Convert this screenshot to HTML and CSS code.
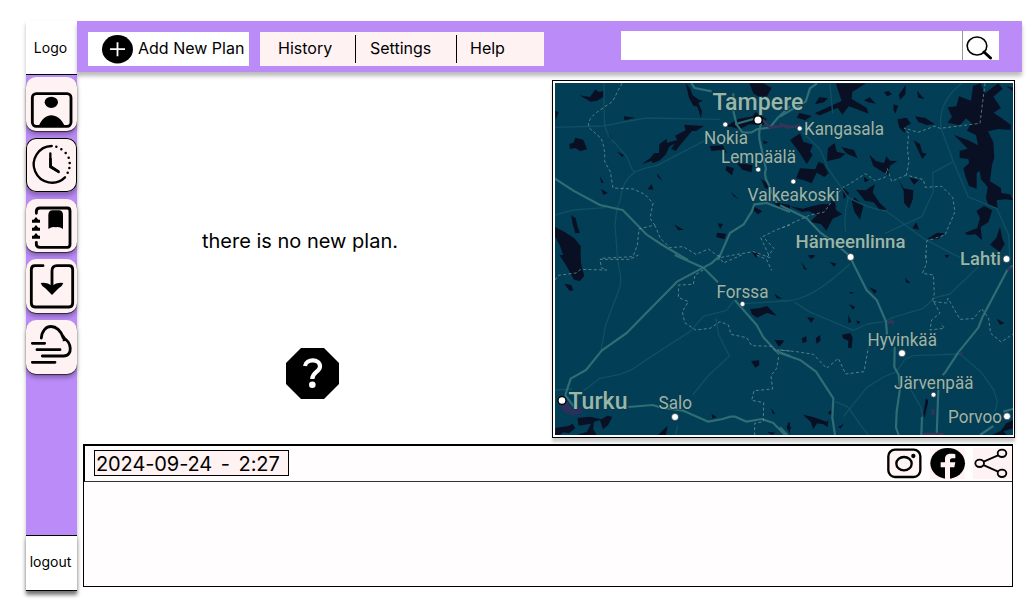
FILE: index.html
```html
<!DOCTYPE html>
<html lang="en">
<head>
<meta charset="utf-8">
<title>Travel plans</title>
<link rel="stylesheet" href="styles.css">
</head>
<body>
<div class="app">
  <aside class="sidebar">
    <div class="logo">Logo</div>
    <nav class="tiles">
      <a class="tile"><svg viewBox="0 0 153 162"><rect class="ln" x="19" y="50" width="116" height="98" rx="12"/><ellipse cx="76" cy="76" rx="20" ry="17"/><path d="M38 148C46 126 62 115 76 115S108 126 116 148Z"/></svg></a>
      <a class="tile outlined"><svg viewBox="0 0 153 162"><path class="ln thin" d="M77 24A55 55 0 1 0 117 118M73 46V86L98 102"/><path d="M70 60L77 60L78 83L101 98L98 105L70 89Z"/><path class="dots" d="M91 26h.1M106 34h.1M119 45h.1M128 59h.1M131 75h.1M130 90h.1M125 104h.1"/></svg></a>
      <a class="tile"><svg viewBox="0 0 153 162"><path class="ln" d="M31 43V38Q31 27 42 27H124Q132 27 132 36V136Q132 145 124 145H42Q31 145 31 136V130"/><path d="M67 90V48Q67 34 80 34H98Q111 34 111 48V90Q100 82 89 85Q78 82 67 90Z"/><path d="M30 54L37 62H42V71H18V62H23ZM30 78L37 86H42V95H18V86H23ZM30 102L37 110H42V119H18V110H23Z"/></svg></a>
      <a class="tile"><svg viewBox="0 0 153 162"><path class="ln" d="M51 20H27Q16 20 16 32V132Q16 144 27 144H129Q140 144 140 132V32Q140 20 129 20H93Q78 20 78 36V92"/><path d="M44 72Q62 68 78 80Q94 68 112 72Q108 84 98 88L78 108L58 88Q48 84 44 72Z"/></svg></a>
      <a class="tile"><svg viewBox="0 0 153 162"><path class="ln" d="M46 54C50 8 98 8 112 54C137 64 142 108 113 108H49M19 70H56M33 89H102M19 127H87"/><path d="M112 43L125 62L110 64Z"/></svg></a>
    </nav>
    <a class="logout">logout</a>
  </aside>
  <div class="main">
    <header class="topbar">
      <a class="add"><svg viewBox="0 0 31 29"><ellipse cx="15.5" cy="14.2" rx="15.5" ry="14.2"/><path d="M8 14.2H23M15.5 7.2V21.2" stroke="#fff" stroke-width="1.8"/></svg><span>Add New Plan</span></a>
      <nav class="menu"><a class="history">History</a><a class="settings">Settings</a><a class="help">Help</a></nav>
      <form class="search"><input aria-label="Search"><button type="button" aria-label="Find"><svg viewBox="0 0 36 28"><ellipse cx="14" cy="14" rx="9.8" ry="9" fill="none" stroke="#000" stroke-width="1.6"/><path d="M21 20L27.5 26" stroke="#000" stroke-width="3" stroke-linecap="round"/></svg></button></form>
    </header>
    <div class="content">
      <section class="empty">
        <p>there is no new plan.</p>
        <svg viewBox="0 0 53 51"><path d="M15 0H38L53 15V36L38 51H15L0 36V15Z"/><path d="M19 18C20 10.500 34 10.500 34 18.500C34 24 26 24 26.300 31" fill="none" stroke="#fff" stroke-width="4.200"/><circle cx="26.300" cy="36.800" r="3.300" fill="#fff"/></svg>
      </section>
      <section class="map">
        <svg viewBox="555 83 458 352">
          <rect class="land" x="555" y="83" width="458" height="352"/>
          <!-- north-west -->
          <g transform="translate(550 75) scale(.33333)">
            <path class="water" d="M88 61L120 66L136 43L146 51L161 48L162 65L141 77L122 80L104 70ZM58 207L70 203L76 188L100 194L111 223L91 228L75 219L60 222ZM221 124L256 128L224 136ZM275 268L301 249L313 234H327L328 208L350 191L351 203L382 195L375 182L407 166L402 149L462 153L438 168H426L393 207L377 228L363 222L375 205L358 215L348 238L328 257L309 264L304 258ZM407 25L420 40L428 61L444 73L459 77L445 84L456 108L453 130L442 95L430 92L417 68ZM15 456L44 471L73 490L92 513V555H45L29 510L15 485ZM63 420L77 430L83 455L90 473L76 475L68 447ZM15 108L26 111L17 135ZM170 170L187 192L180 196ZM201 229L222 241L216 246ZM149 303L161 323L154 324ZM153 341L173 354L160 360ZM305 327L310 344L293 343ZM321 294L338 318L323 305ZM373 449L401 464L385 466ZM503 445L519 447L511 463ZM501 473L528 476L524 493L499 486ZM543 351L566 373L551 364ZM610 393L637 409L624 418L612 408ZM526 155L565 132L608 124L617 112L650 132L640 150L598 148L568 163L547 156ZM598 25H640L665 38L652 62L630 69L610 55ZM480 213L518 211L531 234L510 225L484 228ZM530 273L552 280L546 301L526 285ZM560 264L608 270L605 292L577 284ZM632 311L656 327L662 345L645 338ZM640 196L655 203L641 207ZM670 382L720 390V408L690 404ZM605 530L628 537L618 548Z"/>
            <path class="minor" d="M15 157L160 153L221 141L290 129L510 133M162 25V95L164 150Q173 190 196 205L230 244L247 285L255 291Q290 276 320 272L470 194M255 291Q215 320 212 370L200 405L195 450L203 555M15 420L70 405L165 398"/>
            <path class="road" d="M15 311L70 347L150 390L218 405L289 478L337 510L414 555M424 25L434 39L485 49M504 555L540 474L581 448L605 410L613 388L650 384L720 411M634 142Q622 178 632 210L648 282Q640 302 654 325L680 384M550 108L560 149L578 173L605 172L620 163L660 157L682 130L720 94M550 55L550 108M555 148L624 128"/>
            <path class="town" d="M638 134L660 158L700 152L720 154"/>
            <path class="border" d="M216 25L206 43L188 79L140 112Q110 135 117 158L153 190Q166 218 164 260L181 290L189 339L250 342L286 359L309 385L300 430L314 450L267 462L262 510L249 545L150 550M314 450L331 490L360 518L400 515L438 538L475 522L510 548L545 541L610 530L660 548L632 488L680 464L720 450M645 492L672 520L650 548"/>
          </g>
          <!-- north-east -->
          <g transform="translate(780 75) scale(.33333)">
            <path class="water" d="M167 25H258L241 36L217 50L215 72L260 98L266 116L220 98L206 94L187 119L173 98L120 121L104 115L150 94L185 78ZM105 88L118 66L144 70L132 82ZM58 114L95 123L76 136L50 128ZM252 76L269 67L288 86L264 82ZM312 52L326 48L336 58L322 64ZM341 88L355 92L346 116L340 103ZM356 60L378 29L376 58L361 74ZM411 47L433 72L414 68ZM352 133L380 128L393 146L377 154L374 174L358 158ZM405 124L436 129L465 148L440 150L415 141ZM141 259L144 219L164 204L170 230L196 236L181 249ZM183 216L222 225L233 250L201 236ZM30 195L60 175L70 200L98 209L90 230L98 240L80 268L60 235ZM48 310L60 280L106 283L115 260L130 266L146 295L133 306L110 293L95 325L70 315ZM268 239L288 258L312 264L319 244L330 257L352 258L329 273L326 301L307 290L280 273ZM401 196L420 207L427 233L440 236L427 252L413 223ZM503 97L529 94L537 64L573 77L579 32L602 25L615 55L631 42L655 25L668 41L640 65L663 99L641 113L676 137L693 150L691 165L656 162L624 169L640 202L643 249L636 270L630 319L663 339L664 354L690 358L699 376L676 373L650 376L653 399L625 389L618 369L623 335L603 313L599 288L590 294L590 341L567 333L555 300L550 280L567 265L565 252L539 249V227L563 221L522 180L565 196L594 211L588 180L561 167L573 143L558 130L540 151L502 143L516 126ZM355 313L371 340L400 346L399 371L387 401L372 383L371 348ZM388 308L417 314L402 329ZM228 344L257 346L274 334L285 328L278 352L299 384L320 403L302 408L281 382L255 377ZM215 379L224 367L250 393L240 434L223 410ZM251 305L268 316L254 322ZM187 336L208 355L191 373ZM28 393L69 401L89 395L126 387L148 388L157 370L166 386L168 405L187 418L158 431L139 467L123 447L89 441L111 421L86 408L66 411ZM409 442L417 464L397 460ZM555 473L591 460L600 429L589 408L612 393L637 406L625 442L602 456L606 496L587 478L562 480ZM660 455L667 491L674 506L660 531L630 509L649 488ZM442 491L472 473L494 475L473 493ZM83 541L106 542L93 552ZM678 33L699 38V49ZM661 298L683 300Z"/>
            <path class="minor" d="M66 170L120 223L144 280L205 368Q270 403 318 408L430 490L540 548M205 368Q190 420 197 470M315 475L425 425L460 350L458 293L520 260L484 162Q470 85 545 25M484 162L520 260L565 366L650 400L686 480L690 555M150 25L158 115"/>
            <path class="road" d="M0 125L50 95L77 80L90 40L111 25M0 391L80 430L120 472L160 501L206 540"/>
            <path class="town" d="M0 146L23 158L60 151"/>
            <path class="border" d="M615 25L600 145L480 160L465 153L414 172L373 159L386 175L382 220L387 260L379 300L430 314L436 337L485 334L518 367L525 410L495 480L440 498L437 555M379 300L335 319L322 281L315 307L286 317L256 296L210 326L188 338L161 371L133 411L88 421L0 461"/>
          </g>
          <!-- south-west -->
          <g transform="translate(550 255) scale(.33333)">
            <path class="water" d="M28 0H90L95 35L103 62L90 78L72 74L50 34ZM43 86L64 90L70 106L59 108ZM600 162L627 160L651 153L681 183L651 174L621 188L606 178ZM603 318L627 316L628 330L616 338ZM673 254L702 257L687 275ZM673 116L697 132L680 130ZM16 519L55 513L68 506L76 520L57 535L40 532L30 540H15ZM82 489L120 485L154 493L172 482L187 485L175 509L159 523L150 496L132 500L129 522L140 540H80L110 531L123 506L86 512ZM324 540L353 512L348 540ZM485 477L500 486L487 491ZM664 459L676 478L667 475ZM710 516L720 500V538ZM652 530L676 533L665 540Z"/>
            <path class="minor" d="M203 0L206 35Q220 80 203 115L167 210L153 285M100 408L150 370L210 358L245 344L340 281L420 230L460 184L530 166L552 136M580 146L720 137M498 190L505 237L538 303L474 363L428 420M384 510L376 540M15 405L66 402"/>
            <path class="road" d="M374 0L460 38L504 82M512 0L484 25L381 80L230 234L155 287L108 345L62 371L46 420M555 136L620 210L640 247L678 288L720 303M235 456L308 450L330 457L400 467L475 500L518 492L540 485H556L590 500L636 492L670 504L705 540M45 420L80 465"/>
            <path d="M25 446L52 437L66 461L93 455L98 473L70 482L42 472Z" fill="#29305b"/>
            <path class="border" d="M15 75L25 61L78 54L92 43L170 45L154 38L150 13L240 13L265 0M460 45L435 60L430 88L386 90L385 127L415 140L397 170L404 203L437 225L480 220L510 200L535 210L543 238L590 248L605 272L665 274L687 300L680 340L663 362L668 402L612 407L605 436L641 443L640 500L614 505V540M505 0L520 24L575 0M620 0L650 14L665 46M680 285L720 288"/>
          </g>
          <!-- south-east -->
          <g transform="translate(780 255) scale(.33333)">
            <path class="water" d="M64 21L81 45L72 42ZM84 0H104L98 9ZM148 20L169 26L163 35ZM267 96L291 107L284 116ZM375 69L391 84L379 83ZM207 110L224 113L212 116ZM207 148L225 155L219 164ZM81 187L103 189L94 204ZM205 180L214 200L205 205ZM229 196L242 201L233 208ZM65 250L79 244L80 260L68 264ZM107 250L120 240L122 257L110 266ZM186 239L211 234L218 248L215 280L204 278L205 257L189 250ZM650 191L674 205L660 209ZM438 430L445 438L434 490L430 475ZM69 479L97 485L140 500L145 495L143 517L130 508L111 505L100 523L92 500ZM143 473L155 465L153 480ZM175 515L192 506L181 521ZM25 501L34 522H20ZM494 0H508L500 10ZM635 540L662 528L679 505L699 495V520L671 529L680 540ZM0 255L12 258L0 273Z"/>
            <path class="minor" d="M0 136Q80 150 210 26M44 142L87 170L220 226L262 207L315 200L338 188L430 160L465 128L510 117L595 35M350 350L375 312L400 302L540 297L602 350L640 403L652 440L645 470M350 350L310 366L260 398L190 485M165 440L203 455L245 515L265 540M390 400L422 455L428 485"/>
            <path class="road" d="M215 16L260 106L290 135L318 200L321 238M344 275L343 336L356 360L360 400L350 470L348 518L356 540M699 32L682 45L607 187L595 218L535 292L495 353L488 360M475 405L470 540M426 485L424 540M0 294L60 315L108 350L160 430L157 488L165 540M0 517L22 540M600 540L640 513M670 470L699 462"/>
            <path class="border" d="M437 0L440 25L427 55L460 60L463 115L458 135L480 174L455 195L450 225L493 220L482 205M460 140L500 144L504 130L540 193L580 191L605 161L626 190L632 235L664 261L699 237M0 285L50 290L100 298L140 340L175 310L197 357L252 350L265 278"/>
            <path class="town" d="M323 204L340 197M336 204H343M538 292L547 298M682 45L697 38M457 462L460 480M430 537H490"/>
          </g>
          <g class="towns">
            <circle class="city" cx="758" cy="120" r="4.2"/><circle cx="725.3" cy="124.5" r="2.5"/><circle cx="799.7" cy="128.500" r="2.500"/><circle cx="758.2" cy="169.500" r="2.500"/><circle cx="793.3" cy="181.6" r="2.500"/><circle cx="850.6" cy="257" r="3.500"/><circle cx="1006.5" cy="259" r="3.500"/><circle cx="742.5" cy="304" r="2.500"/><circle cx="902" cy="353.3" r="3.500"/><circle cx="933.5" cy="394.7" r="2.500"/><circle class="city" cx="562" cy="400.5" r="4"/><circle cx="675" cy="417" r="3.500"/><circle cx="1007" cy="416.3" r="3.500"/>
          </g>
          <g class="labels">
            <text class="lg" x="712.5" y="110" textLength="91" lengthAdjust="spacingAndGlyphs">Tampere</text>
            <text x="704" y="143.5" textLength="44" lengthAdjust="spacingAndGlyphs">Nokia</text>
            <text x="804" y="135" textLength="80" lengthAdjust="spacingAndGlyphs">Kangasala</text>
            <text x="721" y="163" textLength="75" lengthAdjust="spacingAndGlyphs">Lempäälä</text>
            <text x="747.5" y="200.500" textLength="92" lengthAdjust="spacingAndGlyphs">Valkeakoski</text>
            <text class="md" x="795.5" y="248" textLength="110" lengthAdjust="spacingAndGlyphs">Hämeenlinna</text>
            <text class="md" x="960" y="265" textLength="41" lengthAdjust="spacingAndGlyphs">Lahti</text>
            <text x="716.5" y="297.5" textLength="52" lengthAdjust="spacingAndGlyphs">Forssa</text>
            <text x="867.500" y="345.5" textLength="69.500" lengthAdjust="spacingAndGlyphs">Hyvinkää</text>
            <text x="894" y="388.5" textLength="79.500" lengthAdjust="spacingAndGlyphs">Järvenpää</text>
            <text class="lg" x="568.5" y="409" textLength="59" lengthAdjust="spacingAndGlyphs">Turku</text>
            <text x="658.500" y="409" textLength="33.500" lengthAdjust="spacingAndGlyphs">Salo</text>
            <text x="948" y="422.5" textLength="54" lengthAdjust="spacingAndGlyphs">Porvoo</text>
          </g>
        </svg>
      </section>
    </div>
    <footer class="panel">
      <div class="panel-head">
        <time>2024-09-24&nbsp; -&nbsp; 2:27</time>
        <div class="social">
          <svg viewBox="0 0 120 93"><g fill="#fff5f5" stroke="#000" stroke-width="7"><rect x="4" y="5" width="96" height="82" rx="20"/><ellipse cx="51" cy="47" rx="23" ry="20"/></g><circle cx="79" cy="24" r="6.500"/></svg>
          <svg viewBox="0 0 120 93"><path fill="#fff2f2" d="M0 0H104V93H0Z"/><ellipse cx="53" cy="46" rx="52" ry="46"/><path fill="#fff2f2" d="M45 93V58H32V43H45V34C45 19 56 15 76 19V31H67C61 31 60 34 60 39V43H76L73 58H60V93Z"/></svg>
          <svg viewBox="0 0 120 93"><path fill="#fff2f2" d="M0 0H116V93H0Z"/><path d="M20 46L87 17M20 46L87 76" stroke="#000" stroke-width="5.500"/><g fill="#fff2f2" stroke="#000" stroke-width="5.500"><ellipse cx="20" cy="46" rx="13" ry="11"/><ellipse cx="87" cy="16" rx="13" ry="11"/><ellipse cx="87" cy="76" rx="13" ry="11"/></g></svg>
        </div>
      </div>
    </footer>
  </div>
</div>
</body>
</html>
```
FILE: styles.css
```css
* { box-sizing: border-box; }
body { margin: 0; background: #fff; color: #000; font-family: Inter, sans-serif; }
svg { display: block; }
.app { display: flex; width: 1036px; height: 609px; padding: 21px 14px 18px 26px; }
.sidebar { display: flex; flex-direction: column; width: 51px; background: #bb8bf7; box-shadow: 0 3px 4px #0004; }
.logo, .logout { display: flex; align-items: center; justify-content: center; background: #fff; font-size: 14px; }
.logo { height: 54px; padding-right: 2px; border-bottom: 1px solid #000; }
.logout { height: 56px; border: solid #000; border-width: 1px 0; padding: 0 2px 3px 0; box-shadow: 0 4px 4px #0006; }
.tiles { display: flex; flex: 1; flex-direction: column; gap: 7px; padding-top: 2px; }
.tile { height: 53.8px; border-radius: 10px; background: #fff2f2; box-shadow: 0 1px 1px #000a, 0 4px 4px #0004; }
.tile svg { width: 51px; height: 54px; }
.outlined { box-shadow: inset 0 0 0 1px #000, 0 4px 4px #0004; }
.ln { fill: none; stroke: #000; stroke-width: 8.5; stroke-linecap: round; stroke-linejoin: round; }
.thin { stroke-width: 7; }
.dots { stroke: #000; stroke-width: 7.5; stroke-linecap: round; }
.main { display: flex; flex: 1; flex-direction: column; }
.topbar { display: flex; height: 51px; padding: 11px 23px 0 11px; background: #bb8bf7; box-shadow: 0 4px 4px #0004; }
.add { display: flex; align-items: center; gap: 5px; width: 161px; height: 34px; padding-left: 14px; background: #fff; font-size: 16px; white-space: nowrap; }
.add span { margin-top: -2px; }
.add svg { width: 31px; height: 29px; }
.menu { display: flex; align-items: center; width: 284px; height: 34px; margin-left: 11px; background: #fff2f2; font-size: 16px; }
.menu a { height: 28px; line-height: 27px; }
.history { width: 96px; padding-left: 18px; border-right: 1px solid #000; }
.settings { width: 101px; padding-left: 14px; border-right: 1px solid #000; }
.help { padding-left: 13px; }
.search { display: flex; width: 378px; height: 29px; margin: -1px 0 0 77px; }
.search input { width: 341px; border: 0; padding: 0 8px; background: #fff; }
.search button { width: 37px; height: 29px; padding: 0; border: 0; border-left: 1px solid #999; background: #fff; }
.search button svg { width: 36px; height: 28px; }
.content { display: flex; justify-content: space-between; height: 372px; padding: 8px 7px 0 0; }
.empty { display: flex; flex-direction: column; align-items: center; width: 471px; padding-top: 149px; }
.empty p { margin: 0 0 95px -25px; font-size: 20px; line-height: 24px; }
.empty svg { width: 53px; height: 51px; }
.map { width: 463px; height: 358px; padding: 2px; border: 1px solid #000; background: #fff; box-shadow: 0 4px 3px #0003; }
.map svg { width: 458px; height: 352px; }
.land { fill: #033e57; }
.water { fill: #0a1024; }
.minor, .road, .border, .town { fill: none; stroke-linejoin: round; }
.minor { stroke: #0f5062; stroke-width: 4; }
.road { stroke: #2f6e75; stroke-width: 6.5; }
.border { stroke: #6b989b; stroke-width: 3; stroke-dasharray: 9 7; opacity: .75; }
.town { stroke: #37345a; stroke-width: 8; }
.towns { fill: #fff; stroke: #263544; stroke-width: .7; }
.city { stroke: #000; stroke-width: 1.4; }
.labels { fill: #93b8ac; stroke: #153646; stroke-width: 1.5; paint-order: stroke; font: 18px Roboto, sans-serif; }
.md { font-size: 18.5px; font-weight: 500; }
.lg { font-size: 23.5px; font-weight: 500; }
.panel { width: 930px; height: 143px; margin-left: 6px; border: 1px solid #000; background: #fffdfe; box-shadow: inset 0 1px #000; }
.panel-head { display: flex; align-items: center; justify-content: space-between; height: 37px; padding-left: 9px; border-left: 1px solid #000; border-bottom: 1px solid #333; }
.panel-head time { width: 195px; height: 26px; padding-left: 1px; border: 1px solid #000; background: #fff2f2; font-size: 20px; letter-spacing: -.1px; word-spacing: -1.2px; line-height: 26px; white-space: nowrap; }
.social { display: flex; gap: 3px; margin-right: -1px; }
.social svg { width: 40px; height: 31px; }
```
